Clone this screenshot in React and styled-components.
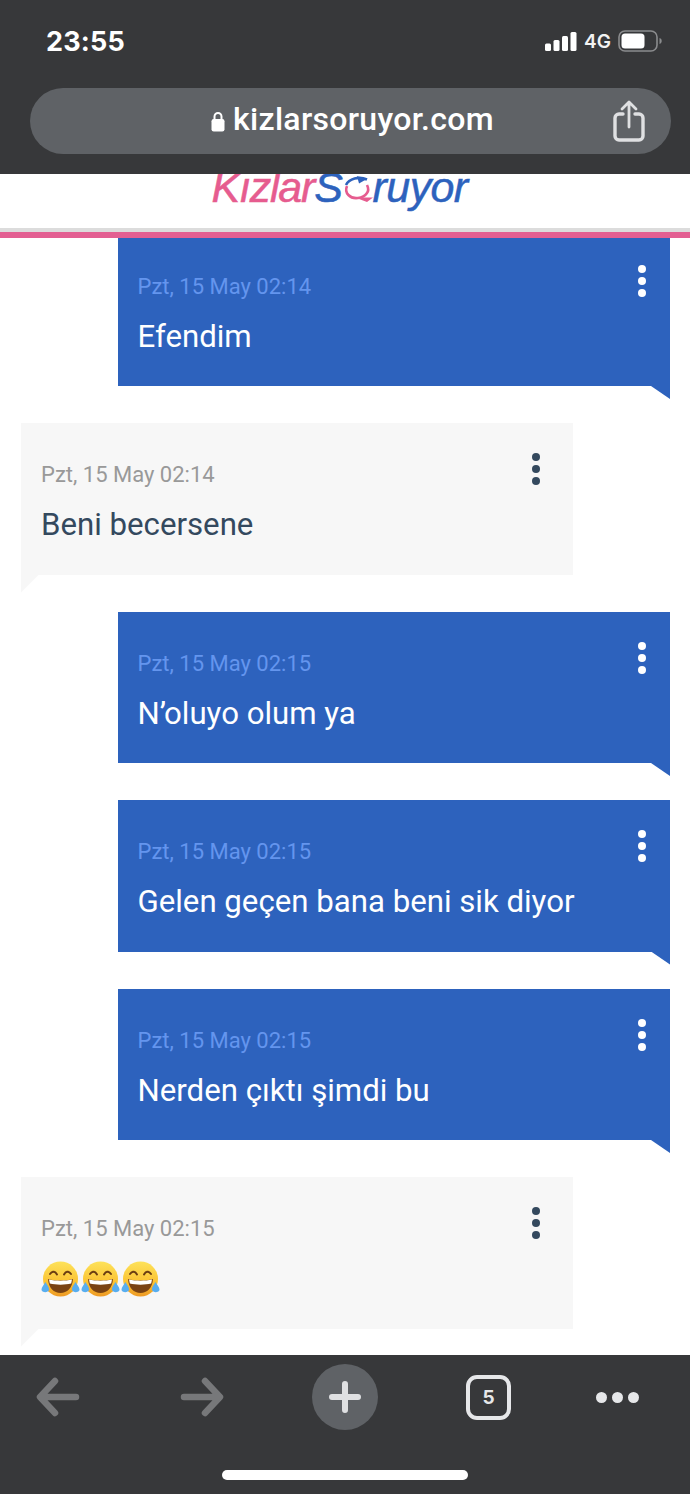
import React from "react"
import styled, { createGlobalStyle } from "styled-components"

const GlobalStyle = createGlobalStyle`
  html, body {
    margin: 0;
    padding: 0;
    background: #fff;
    font-family: Roboto, "Liberation Sans", sans-serif;
  }
`

const Page = styled.div`
  width: 690px;
  height: 1494px;
  display: flex;
  flex-direction: column;
  overflow: hidden;
`

const TopBar = styled.div`
  height: 174px;
  flex: none;
  box-sizing: border-box;
  padding: 22px 19px 20px 30px;
  background: #37383a;
  display: flex;
  flex-direction: column;
  justify-content: space-between;
`

const StatusRow = styled.div`
  height: 38px;
  display: flex;
  align-items: center;
  justify-content: space-between;
  padding: 0 9px 0 16px;
  color: #fff;
`

const Clock = styled.span`
  font-family: Inter, sans-serif;
  font-size: 27px;
  font-weight: 700;
  letter-spacing: 0.2px;
`

const StatusIcons = styled.div`
  display: flex;
  align-items: center;
  gap: 7px;
`

const Network = styled.span`
  font-family: Inter, sans-serif;
  font-size: 19px;
  font-weight: 600;
  color: #f2f2f2;
`

const UrlPill = styled.div`
  position: relative;
  height: 66px;
  box-sizing: border-box;
  padding-left: 4px;
  border-radius: 33px;
  background: #5f6266;
  display: flex;
  align-items: center;
  justify-content: center;
  gap: 8px;
  color: #fff;
`

const UrlText = styled.span`
  font-family: Roboto, sans-serif;
  font-size: 32px;
  line-height: 62px;
  margin-top: -4px;
  font-weight: 500;
  letter-spacing: 0.3px;
`

const ShareButton = styled.div`
  position: absolute;
  right: 26px;
  top: 12px;
  display: flex;
`

const Header = styled.div`
  height: 64px;
  flex: none;
  box-sizing: border-box;
  background: #fff;
  border-bottom: 6px solid #e35f92;
  box-shadow: inset 0 -4px 0 #dcdcdc;
  display: flex;
  justify-content: center;
  overflow: hidden;
`

const Logo = styled.div`
  display: flex;
  align-items: center;
  height: 42px;
  margin: -8px 0 0 -11px;
  font-family: "Liberation Sans", sans-serif;
  font-style: italic;
  font-size: 43px;
  letter-spacing: -1.2px;
  -webkit-text-stroke: 0.5px currentColor;
`

const LogoPart = styled.span`
  color: ${(p) => (p.$pink ? "#e65c8f" : "#2d62bd")};
  letter-spacing: ${(p) => p.$spacing ?? -1.2}px;
`

const RingSlot = styled.span`
  display: flex;
  margin: 4px -1px 0 0;
`

const Chat = styled.div`
  flex: 1;
  min-height: 0;
  background: #fff;
  overflow: hidden;
`

const ChatList = styled.div`
  display: flex;
  flex-direction: column;
  gap: 37px;
  margin-top: -3.5px;
  padding: 0 20px 0 21px;
`

const Bubble = styled.div`
  position: relative;
  width: 552px;
  height: 151.5px;
  flex: none;
  box-sizing: border-box;
  padding: 39px 20px 0 ${(p) => (p.$mine ? 19.5 : 20)}px;
  align-self: ${(p) => (p.$mine ? "flex-end" : "flex-start")};
  background: ${(p) => (p.$mine ? "#2d62bd" : "#f7f7f7")};
  color: ${(p) => (p.$mine ? "#fff" : "#34495e")};

  &::after {
    content: "";
    position: absolute;
    top: 100%;
    ${(p) => (p.$mine ? "right: 0;" : "left: 0;")}
    width: ${(p) => (p.$mine ? 19 : 18)}px;
    height: ${(p) => (p.$mine ? 13 : 18)}px;
    background: inherit;
    clip-path: ${(p) =>
      p.$mine ? "polygon(0 0, 100% 0, 100% 100%)" : "polygon(0 0, 100% 0, 0 100%)"};
  }
`

const Stamp = styled.div`
  font-size: 22px;
  line-height: 26px;
  font-weight: 400;
  color: ${(p) => (p.$mine ? "#6495ee" : "#999999")};
`

const Text = styled.div`
  margin-top: 19px;
  font-size: 31.2px;
  line-height: 36px;
  font-weight: 400;
`

const Emojis = styled.div`
  display: flex;
  margin-top: 19px;
`

const Dots = styled.div`
  position: absolute;
  top: 30px;
  right: ${(p) => (p.$mine ? 24 : 33)}px;
  display: flex;
  flex-direction: column;
  gap: 4px;
`

const Dot = styled.span`
  width: 8px;
  height: 8px;
  border-radius: 50%;
  background: ${(p) => (p.$mine ? "#fff" : "#34495e")};
`

const BottomBar = styled.div`
  height: 139px;
  flex: none;
  box-sizing: border-box;
  background: #37383a;
  display: flex;
  flex-direction: column;
  align-items: center;
  padding-top: 9px;
`

const Tools = styled.div`
  width: 100%;
  height: 66px;
  box-sizing: border-box;
  padding-left: 36px;
  display: grid;
  grid-template-columns: 44px 100px 44px 88px 66px 88px 45px 85px 44px;
  align-items: center;
`

const NewTab = styled.div`
  width: 66px;
  height: 66px;
  border-radius: 50%;
  background: #5f6266;
  display: flex;
  align-items: center;
  justify-content: center;
`

const TabCount = styled.div`
  width: 45px;
  height: 45px;
  box-sizing: border-box;
  border: 4px solid #e6e7e9;
  border-radius: 11px;
  display: flex;
  align-items: center;
  justify-content: center;
  font-family: Inter, sans-serif;
  font-size: 19px;
  font-weight: 700;
  color: #e6e7e9;
`

const MoreDots = styled.div`
  display: flex;
  gap: 5px;
`

const MoreDot = styled.span`
  width: 11px;
  height: 11px;
  flex: none;
  border-radius: 50%;
  background: #e6e7e9;
`

const HomeBar = styled.div`
  width: 246px;
  height: 10px;
  border-radius: 5px;
  background: #fff;
  margin-top: 40px;
`

const Signal = () => (
  <svg width="32" height="19" viewBox="0 0 32 19">
    <rect x="0" y="11.500" width="6" height="7.500" rx="1.500" fill="#fff" />
    <rect x="8.500" y="8" width="6" height="11" rx="1.500" fill="#fff" />
    <rect x="17" y="4" width="6" height="15" rx="1.500" fill="#fff" />
    <rect x="25.500" y="0" width="6" height="19" rx="1.500" fill="#fff" />
  </svg>
)

const Battery = () => (
  <svg width="44" height="22" viewBox="0 0 44 22">
    <rect x="1" y="1" width="38" height="20" rx="6" fill="none" stroke="#8b8c8e" strokeWidth="1.600" />
    <rect x="3.500" y="3.500" width="23" height="15" rx="3.500" fill="#fff" />
    <path d="M41.500 8c1.600.4 2.200 1.600 2.200 3s-.6 2.600-2.200 3z" fill="#8b8c8e" />
  </svg>
)

const Lock = () => (
  <svg width="14" height="21" viewBox="0 0 14 21">
    <path d="M3.500 9V5.500a3.500 3.500 0 0 1 7 0V9" fill="none" stroke="#fff" strokeWidth="2" />
    <rect x="0.500" y="8" width="13" height="12.500" rx="2.200" fill="#fff" />
  </svg>
)

const Share = () => (
  <svg width="32" height="42" viewBox="0 0 32 42" fill="none" stroke="#dfe0e2" strokeLinecap="round" strokeLinejoin="round">
    <path d="M10 14H6a4 4 0 0 0-4 4v18a4 4 0 0 0 4 4h20a4 4 0 0 0 4-4V18a4 4 0 0 0-4-4h-4" strokeWidth="3.400" />
    <path d="M16 27V3M9 9l7-7 7 7" strokeWidth="2.800" />
  </svg>
)

const LogoRing = () => (
  <svg width="32" height="30" viewBox="0 0 32 30" fill="none" strokeWidth="2.600">
    <path d="M4 11C7 4.500 17 2 25 5.500" stroke="#2d62bd" />
    <path d="M15 2l9 3.500-7 4z" fill="#2d62bd" stroke="none" />
    <path d="M5 12c-3 7 3 13 11 12 4-.5 7-2 9-5 1.500-2 1.500-5 0-8" stroke="#e65c8f" />
    <path d="M13 23.500h18l-6 4.500z" fill="#e65c8f" stroke="none" />
  </svg>
)

const Arrow = ({ flip }) => (
  <svg width="44" height="40" viewBox="0 0 44 40" fill="none" stroke="#77787a" strokeWidth="6.500" strokeLinecap="round" strokeLinejoin="round" style={flip ? { transform: "scaleX(-1)" } : undefined}>
    <path d="M40 20H5M19 4 4 20l15 16" />
  </svg>
)

const Plus = () => (
  <svg width="32" height="32" viewBox="0 0 32 32" stroke="#dfe0e2" strokeWidth="6" strokeLinecap="round">
    <path d="M16 3v26M3 16h26" />
  </svg>
)

const Laugh = () => (
  <svg width="40" height="36" viewBox="0 0 40 36" role="img" aria-label="😂">
    <defs>
      <linearGradient id="face" x1="0" y1="0" x2="0" y2="1">
        <stop offset="0" stopColor="#fde25a" />
        <stop offset="0.6" stopColor="#fbc232" />
        <stop offset="1" stopColor="#ee9a24" />
      </linearGradient>
    </defs>
    <circle cx="19.500" cy="18" r="17.500" fill="url(#face)" />
    <path d="M9 13c2-3 5-3 7 .5M23 13.500c2-3.500 5-3.500 7-.5" fill="none" stroke="#6b3d12" strokeWidth="2" strokeLinecap="round" />
    <path d="M7 18c8 2 17 2 25 0-.6 9-6 14-12.500 14S7.600 27 7 18z" fill="#7a4314" />
    <path d="M8 18.500c7 1.600 16 1.600 23 0l-.8 4c-6 1.500-15.400 1.500-21.400 0z" fill="#fff" />
    <path d="M4.500 21c1.600 3 4 5.500 3.500 8-.6 2.500-6 3-7.300.4-1-2.400 2-5 3.800-8.400zM34.500 21c-1.600 3-4 5.500-3.500 8 .6 2.500 6 3 7.300.4 1-2.400-2-5-3.800-8.400z" fill="#58aef0" />
  </svg>
)

const messages = [
  { mine: true, time: "Pzt, 15 May 02:14", text: "Efendim" },
  { mine: false, time: "Pzt, 15 May 02:14", text: "Beni becersene" },
  { mine: true, time: "Pzt, 15 May 02:15", text: "N’oluyo olum ya" },
  { mine: true, time: "Pzt, 15 May 02:15", text: "Gelen geçen bana beni sik diyor" },
  { mine: true, time: "Pzt, 15 May 02:15", text: "Nerden çıktı şimdi bu" },
  { mine: false, time: "Pzt, 15 May 02:15", laughs: 3 },
]

function Message({ mine, time, text, laughs }) {
  return (
    <Bubble $mine={mine}>
      <Stamp $mine={mine}>{time}</Stamp>
      {laughs ? (
        <Emojis>
          {Array.from({ length: laughs }, (_, i) => <Laugh key={i} />)}
        </Emojis>
      ) : (
        <Text>{text}</Text>
      )}
      <Dots $mine={mine}>
        <Dot $mine={mine} />
        <Dot $mine={mine} />
        <Dot $mine={mine} />
      </Dots>
    </Bubble>
  )
}

function App() {
  return (
    <Page>
      <GlobalStyle />
      <TopBar>
        <StatusRow>
          <Clock>23:55</Clock>
          <StatusIcons>
            <Signal />
            <Network>4G</Network>
            <Battery />
          </StatusIcons>
        </StatusRow>
        <UrlPill>
          <Lock />
          <UrlText>kizlarsoruyor.com</UrlText>
          <ShareButton>
            <Share />
          </ShareButton>
        </UrlPill>
      </TopBar>

      <Header>
        <Logo>
          <LogoPart $pink>Kızlar</LogoPart>
          <LogoPart>S</LogoPart>
          <RingSlot><LogoRing /></RingSlot>
          <LogoPart $spacing={-0.6}>ruyor</LogoPart>
        </Logo>
      </Header>

      <Chat>
        <ChatList>
          {messages.map((m, i) => <Message key={i} {...m} />)}
        </ChatList>
      </Chat>

      <BottomBar>
        <Tools>
          <Arrow />
          <span />
          <Arrow flip />
          <span />
          <NewTab><Plus /></NewTab>
          <span />
          <TabCount>5</TabCount>
          <span />
          <MoreDots>
            <MoreDot />
            <MoreDot />
            <MoreDot />
          </MoreDots>
        </Tools>
        <HomeBar />
      </BottomBar>
    </Page>
  )
}

export default App
